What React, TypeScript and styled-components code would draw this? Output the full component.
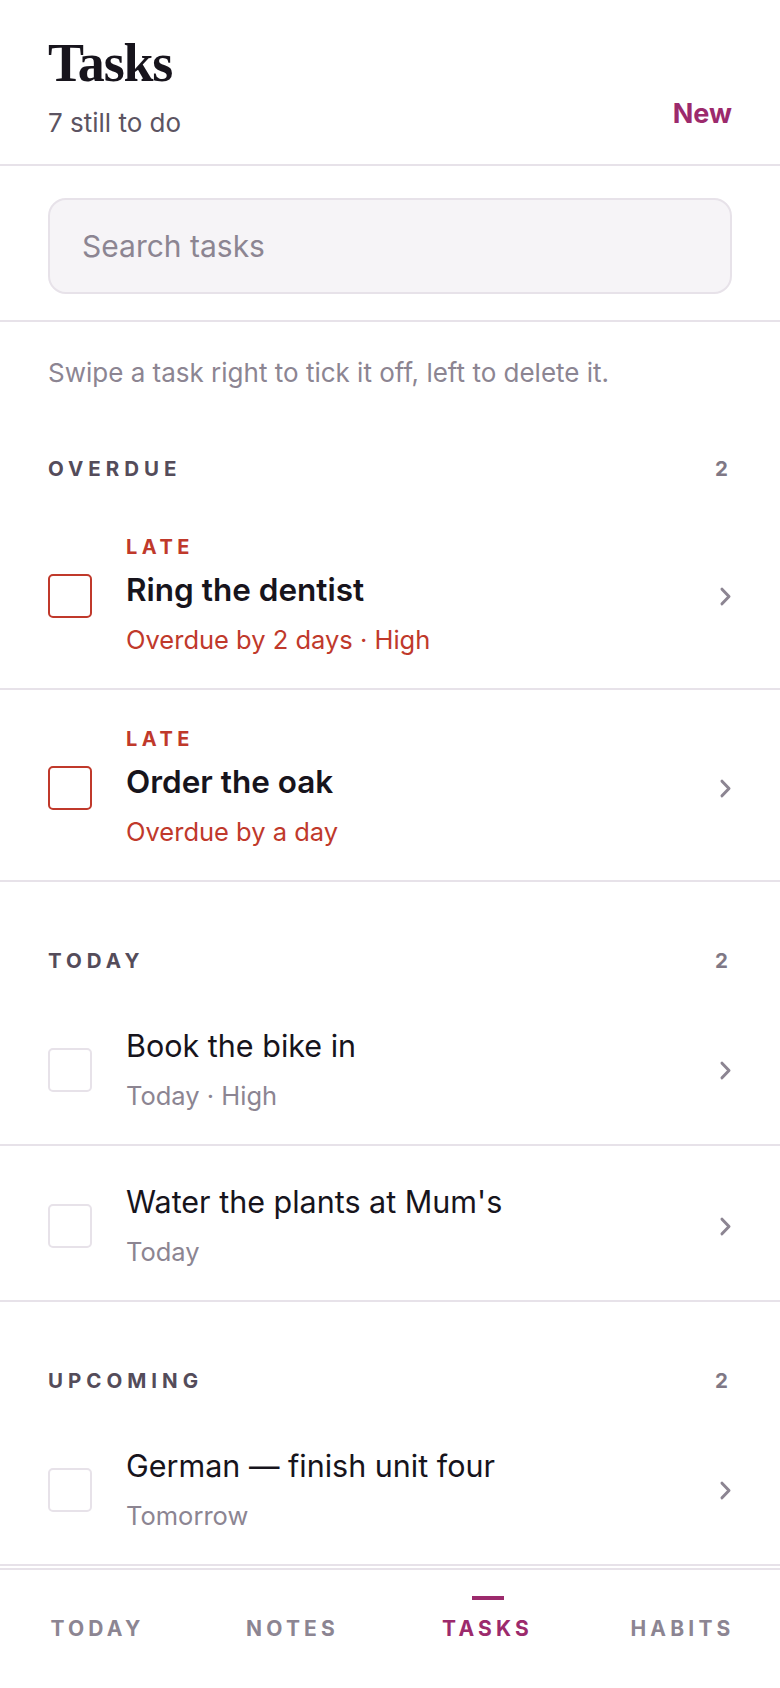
import React from 'react';
import styled, { createGlobalStyle } from 'styled-components';

const GlobalStyle = createGlobalStyle`
  html, body {
    margin: 0;
    padding: 0;
    background: #ffffff;
  }
  body {
    font-family: Inter, "Noto Sans", "Liberation Sans", sans-serif;
    color: #17141c;
    -webkit-font-smoothing: antialiased;
  }
  * {
    box-sizing: border-box;
  }
`;

interface Task {
  title: string;
  meta: string;
  late?: boolean;
}

interface Group {
  name: string;
  tasks: Task[];
}

const groups: Group[] = [
  {
    name: 'Overdue',
    tasks: [
      { title: 'Ring the dentist', meta: 'Overdue by 2 days · High', late: true },
      { title: 'Order the oak', meta: 'Overdue by a day', late: true },
    ],
  },
  {
    name: 'Today',
    tasks: [
      { title: 'Book the bike in', meta: 'Today · High' },
      { title: "Water the plants at Mum's", meta: 'Today' },
    ],
  },
  {
    name: 'Upcoming',
    tasks: [
      { title: 'German — finish unit four', meta: 'Tomorrow' },
      { title: 'Renew the car insurance', meta: 'Friday' },
    ],
  },
  {
    name: 'Someday',
    tasks: [{ title: 'Clear out the loft', meta: 'No date' }],
  },
];

const tabs = ['Today', 'Notes', 'Tasks', 'Habits'];

const Page = styled.main`
  min-height: 100vh;
  padding-bottom: 120px;
`;

const Header = styled.header`
  display: flex;
  justify-content: space-between;
  align-items: flex-end;
  padding: 34px 48px 24px;
  border-bottom: 2px solid #e7e2e9;
`;

const Title = styled.h1`
  margin: 0 0 13px;
  font-family: "Liberation Serif", "Times New Roman", serif;
  font-weight: 700;
  font-size: 54px;
  line-height: 59px;
  letter-spacing: -1.2px;
  color: #17141c;
`;

const Subtitle = styled.div`
  font-size: 26px;
  line-height: 34px;
  color: #5c5462;
`;

const NewButton = styled.button`
  margin: 0 0 9px;
  padding: 0;
  border: 0;
  background: none;
  font-family: inherit;
  font-size: 27px;
  line-height: 34px;
  font-weight: 700;
  color: #9c2a6c;
  cursor: pointer;
`;

const SearchBar = styled.div`
  padding: 32px 48px 26px;
  border-bottom: 2px solid #e7e2e9;
`;

const SearchInput = styled.input`
  display: block;
  width: 100%;
  height: 96px;
  padding: 0 32px;
  border: 2px solid #e7e2e9;
  border-radius: 18px;
  background: #f6f4f7;
  font-family: inherit;
  font-size: 30px;
  color: #17141c;
  outline: none;

  &::placeholder {
    color: #8c8592;
  }
`;

const Hint = styled.p`
  margin: 0;
  padding: 34px 48px 0;
  font-size: 26px;
  line-height: 34px;
  color: #8c8592;
`;

const Section = styled.section`
  padding-top: 67px;
`;

const SectionHead = styled.div`
  display: flex;
  justify-content: space-between;
  padding: 0 48px;
  margin-bottom: 17px;
  font-size: 20.5px;
  line-height: 24px;
  font-weight: 700;
  letter-spacing: 5px;
  text-transform: uppercase;
  color: #544c5a;
`;

const Count = styled.span`
  color: #7f7886;
  letter-spacing: 4px;
`;

const Row = styled.div`
  display: flex;
  align-items: center;
  gap: 34px;
  padding: 38px 48px 32px;
  border-bottom: 2px solid #e7e2e9;
`;

const Check = styled.span<{ $late?: boolean }>`
  flex: none;
  width: 44px;
  height: 44px;
  border: 2px solid ${(p) => (p.$late ? '#c0392b' : '#e7e2e9')};
  border-radius: 5px;
`;

const Body = styled.div`
  flex: 1;
  min-width: 0;
  display: flex;
  flex-direction: column;
`;

const Flag = styled.div`
  margin-bottom: 14px;
  font-size: 20px;
  line-height: 22px;
  font-weight: 700;
  letter-spacing: 4.5px;
  color: #c0392b;
`;

const TaskTitle = styled.div<{ $late?: boolean }>`
  font-size: ${(p) => (p.$late ? '31.5px' : '30.5px')};
  line-height: 36px;
  font-weight: ${(p) => (p.$late ? 600 : 400)};
  color: #17141c;
`;

const Meta = styled.div<{ $late?: boolean }>`
  margin-top: 16px;
  font-size: 25.5px;
  line-height: 32px;
  color: ${(p) => (p.$late ? '#c0392b' : '#8c8592')};
`;

const Chevron = styled.svg`
  flex: none;
  width: 13px;
  height: 19px;
`;

const Nav = styled.nav`
  position: fixed;
  left: 0;
  right: 0;
  bottom: 0;
  height: 120px;
  display: grid;
  grid-template-columns: repeat(4, 1fr);
  background: #ffffff;
  border-top: 2px solid #e7e2e9;
`;

const Tab = styled.a<{ $active?: boolean }>`
  display: flex;
  flex-direction: column;
  align-items: center;
  gap: 17px;
  padding-top: 26px;
  font-size: 21px;
  line-height: 24px;
  font-weight: 700;
  letter-spacing: 4.2px;
  text-transform: uppercase;
  text-decoration: none;
  color: ${(p) => (p.$active ? '#9c2a6c' : '#8c8592')};

  &::before {
    content: '';
    width: 32px;
    height: 4px;
    background: ${(p) => (p.$active ? '#9c2a6c' : 'transparent')};
  }
`;

const TaskRow: React.FC<{ task: Task }> = ({ task }) => (
  <Row>
    <Check $late={task.late} />
    <Body>
      {task.late && <Flag>LATE</Flag>}
      <TaskTitle $late={task.late}>{task.title}</TaskTitle>
      <Meta $late={task.late}>{task.meta}</Meta>
    </Body>
    <Chevron viewBox="0 0 13 19" fill="none">
      <polyline
        points="3,2.2 10,9.5 3,16.8"
        stroke="#8c8592"
        strokeWidth="3"
        strokeLinecap="round"
        strokeLinejoin="round"
      />
    </Chevron>
  </Row>
);

export default function App() {
  return (
    <>
      <GlobalStyle />
      <Page>
        <Header>
          <div>
            <Title>Tasks</Title>
            <Subtitle>7 still to do</Subtitle>
          </div>
          <NewButton>New</NewButton>
        </Header>
        <SearchBar>
          <SearchInput placeholder="Search tasks" />
        </SearchBar>
        <Hint>Swipe a task right to tick it off, left to delete it.</Hint>
        {groups.map((group) => (
          <Section key={group.name}>
            <SectionHead>
              <span>{group.name}</span>
              <Count>{group.tasks.length}</Count>
            </SectionHead>
            {group.tasks.map((task) => (
              <TaskRow key={task.title} task={task} />
            ))}
          </Section>
        ))}
      </Page>
      <Nav>
        {tabs.map((tab) => (
          <Tab key={tab} href="#" $active={tab === 'Tasks'}>
            {tab}
          </Tab>
        ))}
      </Nav>
    </>
  );
}
